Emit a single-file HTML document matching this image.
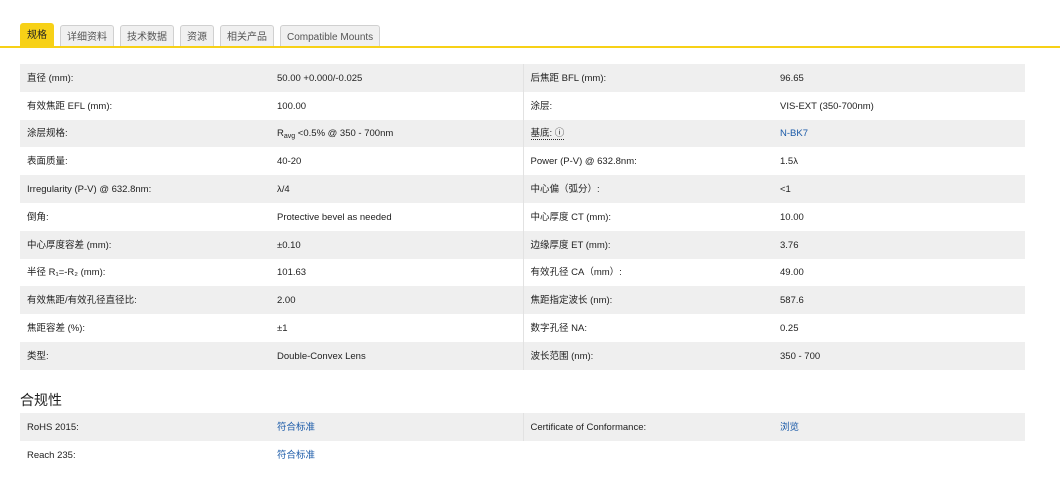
<!DOCTYPE html>
<html><head><meta charset="utf-8"><style>
body{margin:0;background:#fff;font-family:"Liberation Sans","Noto Sans CJK SC",sans-serif;font-size:10px;color:#222;width:1060px;height:499px;overflow:hidden;position:relative}
.tabs{position:absolute;left:20px;top:23px;display:flex;gap:6px}
.tab{height:22px;line-height:24px;padding:0 6px;border:1px solid #d0d0d0;border-bottom:none;background:#f0f0f0;color:#555;font-size:10px;border-radius:3px 3px 0 0;box-sizing:border-box;margin-top:2px}
.tab.on{background:#f7d117;border-color:#f7d117;color:#222;margin-top:0;height:24px}
.line{position:absolute;left:0;top:46px;width:1060px;height:2px;background:#f7d117}
table{position:absolute;left:20px;border-collapse:collapse;width:1005px;table-layout:fixed}
td{height:27.8px;padding:2px 0 0 7px;font-size:9.5px;white-space:nowrap;line-height:12px;vertical-align:middle;box-sizing:border-box}
tr:nth-child(odd) td{background:#efefef}
td.c1{width:250px}td.c2{width:253px;border-right:1px solid #e2e2e2}td.c3{width:250px}
a{color:#1a5aa8;text-decoration:none}
.sub{font-size:7px;position:relative;top:2px}
h3{position:absolute;left:20px;top:390px;margin:0;font-size:14px;font-weight:normal;color:#222}
</style></head><body>
<div class="tabs"><div class="tab on">规格</div><div class="tab">详细资料</div><div class="tab">技术数据</div><div class="tab">资源</div><div class="tab">相关产品</div><div class="tab">Compatible Mounts</div></div>
<div class="line"></div>
<table style="top:64px">
<tr><td class="c1">直径 (mm):</td><td class="c2">50.00 +0.000/-0.025</td><td class="c3">后焦距 BFL (mm):</td><td>96.65</td></tr>
<tr><td class="c1">有效焦距 EFL (mm):</td><td class="c2">100.00</td><td class="c3">涂层:</td><td>VIS-EXT (350-700nm)</td></tr>
<tr><td class="c1">涂层规格:</td><td class="c2">R<span class="sub">avg</span> &lt;0.5% @ 350 - 700nm</td><td class="c3"><span style="border-bottom:1px dotted #222">基底: ⓘ</span></td><td><a>N-BK7</a></td></tr>
<tr><td class="c1">表面质量:</td><td class="c2">40-20</td><td class="c3">Power (P-V) @ 632.8nm:</td><td>1.5λ</td></tr>
<tr><td class="c1">Irregularity (P-V) @ 632.8nm:</td><td class="c2">λ/4</td><td class="c3">中心偏（弧分）:</td><td>&lt;1</td></tr>
<tr><td class="c1">倒角:</td><td class="c2">Protective bevel as needed</td><td class="c3">中心厚度 CT (mm):</td><td>10.00</td></tr>
<tr><td class="c1">中心厚度容差 (mm):</td><td class="c2">±0.10</td><td class="c3">边缘厚度 ET (mm):</td><td>3.76</td></tr>
<tr><td class="c1">半径 R₁=-R₂ (mm):</td><td class="c2">101.63</td><td class="c3">有效孔径 CA（mm）:</td><td>49.00</td></tr>
<tr><td class="c1">有效焦距/有效孔径直径比:</td><td class="c2">2.00</td><td class="c3">焦距指定波长 (nm):</td><td>587.6</td></tr>
<tr><td class="c1">焦距容差 (%):</td><td class="c2">±1</td><td class="c3">数字孔径 NA:</td><td>0.25</td></tr>
<tr><td class="c1">类型:</td><td class="c2">Double-Convex Lens</td><td class="c3">波长范围 (nm):</td><td>350 - 700</td></tr>
</table>
<h3>合规性</h3>
<table style="top:413px">
<tr><td class="c1">RoHS 2015:</td><td class="c2"><a>符合标准</a></td><td class="c3">Certificate of Conformance:</td><td><a>浏览</a></td></tr>
<tr><td class="c1">Reach 235:</td><td class="c2" style="border-right:none"><a>符合标准</a></td><td class="c3"></td><td></td></tr>
</table>
</body></html>
